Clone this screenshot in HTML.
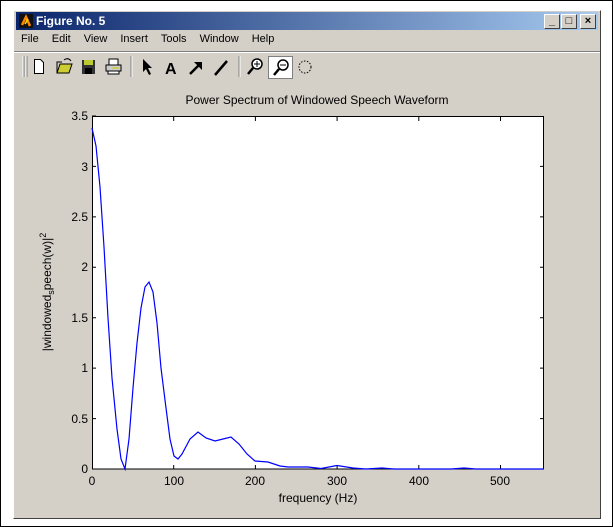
<!DOCTYPE html>
<html><head><style>
body{margin:0;width:613px;height:527px;overflow:hidden;background:#fff;font-family:"Liberation Sans",sans-serif;}
.frame{position:absolute;left:0;top:0;width:611px;height:525px;border:1px solid #000;border-width:1px 1px 1px 1px;}
.win{position:absolute;left:13px;top:10px;width:586px;height:507px;background:#d4d0c8;border-left:1px solid #fff;border-top:1px solid #fff;border-right:1px solid #404040;border-bottom:1px solid #404040;}
.title{position:absolute;left:2px;top:1px;right:2px;height:18px;background:linear-gradient(to right,#0a246a,#a6caf0);}
.title span{position:absolute;left:20px;top:2px;color:#fff;font-weight:bold;font-size:12px;}
.btn{position:absolute;top:2px;width:14px;height:13px;background:#d4d0c8;border:1px solid;border-color:#fff #404040 #404040 #fff;font-size:11px;text-align:center;line-height:13px;font-weight:bold;}
.menu{position:absolute;top:22px;left:7px;font-size:11px;}
.menu span{margin-right:13px;}
.sep{position:absolute;top:40px;left:0;right:0;height:0;border-top:1px solid #808080;border-bottom:1px solid #fff;}
</style></head><body>
<div class="frame"></div>
<div class="win">
 <div class="title">
  <svg style="position:absolute;left:3px;top:2px" width="14" height="14"><rect width="14" height="14" fill="#111"/><path d="M3 11 L7 3 L11 12" stroke="#f80" stroke-width="2.5" fill="none"/><path d="M6 10 L9 5" stroke="#fd0" stroke-width="1.5"/></svg>
  <span>Figure No. 5</span>
  <div class="btn" style="left:528px">_</div>
  <div class="btn" style="left:545px">□</div>
  <div class="btn" style="left:564px">×</div>
 </div>
 <div class="menu"><span>File</span><span>Edit</span><span>View</span><span>Insert</span><span>Tools</span><span>Window</span><span>Help</span></div>
 <div class="sep"></div>
</div>
<svg style="position:absolute;left:0;top:0" width="613" height="527">
 <g stroke-width="1">
  <line x1="23" y1="56" x2="23" y2="77" stroke="#fff"/><line x1="24" y1="56" x2="24" y2="77" stroke="#808080"/>
  <line x1="26" y1="56" x2="26" y2="77" stroke="#fff"/><line x1="27" y1="56" x2="27" y2="77" stroke="#808080"/>
  <path d="M34.5 59.5h6l3 3v11h-9z" fill="#fff" stroke="#000"/>
  <path d="M57 73 L60 64 H72 L69 73 Z" fill="#cc3" stroke="#000"/><path d="M57 73 V62 H62" fill="none" stroke="#000"/><path d="M64 60 Q68 57 71 61" fill="none" stroke="#000"/>
  <rect x="82" y="60" width="13" height="14" fill="#333"/><rect x="84" y="60" width="9" height="5" fill="#bc3"/><rect x="85" y="68" width="7" height="6" fill="#000"/>
  <rect x="106" y="65" width="15" height="6" fill="#ccc" stroke="#000"/><rect x="109" y="59" width="9" height="6" fill="#fff" stroke="#000"/><rect x="108" y="71" width="11" height="3" fill="#fff" stroke="#000"/><line x1="112" y1="68" x2="119" y2="68" stroke="#cc0"/>
  <line x1="131" y1="56" x2="131" y2="77" stroke="#808080"/><line x1="132" y1="56" x2="132" y2="77" stroke="#fff"/>
  <path d="M143 59 L143 72 L146 69 L149 75 L151 74 L148 68 L152 68 Z" fill="#000"/>
  <text x="165" y="74" font-size="16" font-weight="bold" font-family="Liberation Sans">A</text>
  <path d="M190 74 L200 64" stroke="#000" stroke-width="2.5"/><path d="M194 62 H202 V70 Z" fill="#000"/>
  <path d="M215 75 L227 61" stroke="#000" stroke-width="2.5"/>
  <line x1="239" y1="56" x2="239" y2="77" stroke="#808080"/><line x1="240" y1="56" x2="240" y2="77" stroke="#fff"/>
  <circle cx="257" cy="64" r="5" fill="#fff" stroke="#000" stroke-width="1.5"/><path d="M254 64h6M257 61v6" stroke="#000"/><path d="M253 68 L248 74" stroke="#000" stroke-width="2.5"/>
  <rect x="268.5" y="56.5" width="24" height="22" fill="#fff" stroke="#808080"/>
  <circle cx="283" cy="65" r="5" fill="#fff" stroke="#000" stroke-width="1.5"/><path d="M280 65h6" stroke="#000"/><path d="M279 69 L274 75" stroke="#000" stroke-width="2.5"/>
  <circle cx="305" cy="67" r="6" fill="none" stroke="#000" stroke-dasharray="1.5 1.5"/>
 </g>
 <rect x="92.5" y="116.5" width="451" height="352.5" fill="#fff" stroke="#000"/>
 <g stroke="#000">
  <path d="M92 469h4M92 418.6h4M92 368.1h4M92 317.7h4M92 267.3h4M92 216.9h4M92 166.4h4M92 116h4"/>
  <path d="M544 469h-4M544 418.6h-4M544 368.1h-4M544 317.7h-4M544 267.3h-4M544 216.9h-4M544 166.4h-4"/>
  <path d="M173.7 469v-4M255.4 469v-4M337.1 469v-4M418.8 469v-4M500.5 469v-4"/>
  <path d="M173.7 117v4M255.4 117v4M337.1 117v4M418.8 117v4M500.5 117v4"/>
 </g>
 <polyline fill="none" stroke="#00f" stroke-width="1.2" points="92,128 96,146 100,187 104,247 108,318 112,378 117,429 121,459 125,469 129,439 133,388 137,343 141,308 145,287 149,282 153,292 157,323 161,368 166,408 170,439 174,456 178,459 182,454 190,439 198,432 206,438 215,441 223,439 231,437 239,444 247,454 255,461 268,462 280,466 288,467 308,467 321,468.5 337,465.5 353,468 366,469 382,468 394,469 451,469 464,468 476,469 544,469"/>
 <g font-size="12" font-family="Liberation Sans" fill="#000" text-anchor="end">
  <text x="88" y="473">0</text><text x="88" y="423">0.5</text><text x="88" y="372">1</text><text x="88" y="322">1.5</text><text x="88" y="271">2</text><text x="88" y="221">2.5</text><text x="88" y="171">3</text><text x="88" y="120">3.5</text>
 </g>
 <g font-size="12" font-family="Liberation Sans" fill="#000" text-anchor="middle">
  <text x="92" y="485">0</text><text x="174" y="485">100</text><text x="255" y="485">200</text><text x="337" y="485">300</text><text x="419" y="485">400</text><text x="500" y="485">500</text>
  <text x="318" y="502">frequency (Hz)</text>
  <text x="317" y="104">Power Spectrum of Windowed Speech Waveform</text>
  <text transform="translate(51,292) rotate(-90)">|windowed<tspan font-size="9" dy="3">s</tspan><tspan dy="-3">peech(w)|</tspan><tspan font-size="9" dy="-5">2</tspan></text>
 </g>
</svg>
</body></html>
